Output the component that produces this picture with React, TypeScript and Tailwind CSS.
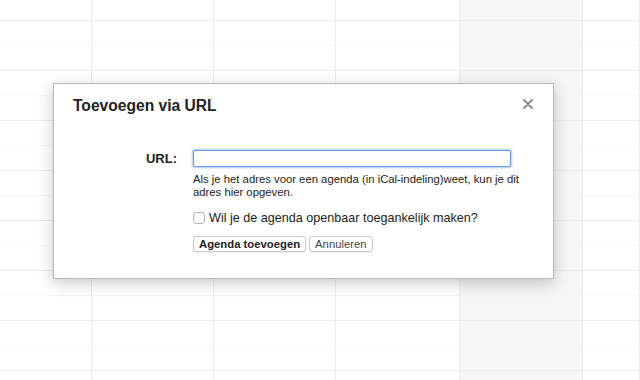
import { useState } from "react";

const columns = [
	{ w: "w-[92px]", today: false },
	{ w: "w-[122px]", today: false },
	{ w: "w-[122px]", today: false },
	{ w: "w-[124px]", today: false },
	{ w: "w-[123px]", today: true },
	{ w: "flex-1", today: false },
];

const rows = Array.from({ length: 16 }, (_, i) => i);

function CalendarGrid() {
	return (
		<div className="flex h-[380px] w-[640px] overflow-hidden bg-white">
			{columns.map((col, ci) => (
				<div
					key={ci}
					className={`${col.w} flex flex-col border-r border-[#ececec] ${col.today ? "bg-[#f6f6f6]" : ""}`}
				>
					{rows.map((r) => (
						<div
							key={r}
							className={`shrink-0 border-b ${r === 0 ? "h-[21px]" : "h-[25px]"} ${r % 2 === 0 ? "border-[#ebebeb]" : "border-[#f6f6f6]"}`}
						/>
					))}
				</div>
			))}
		</div>
	);
}

export default function App() {
	const [url, setUrl] = useState("");
	const [isPublic, setIsPublic] = useState(false);

	return (
		<div
			className="relative h-[380px] w-[640px] overflow-hidden"
			style={{ fontFamily: '"Liberation Sans", Arial, sans-serif' }}
		>
			<CalendarGrid />

			{/* modal dialog */}
			<div className="absolute left-[53px] top-[83px] h-[196px] w-[501px] border border-[#b9b9b9] bg-white shadow-[0_4px_14px_rgba(0,0,0,0.22)]">
				<div className="flex items-start justify-between pl-[19px] pr-[20px] pt-[13px]">
					<h2 className="text-[15.6px] font-bold leading-[18px] text-[#222]">
						Toevoegen via URL
					</h2>
					<button
						type="button"
						className="mt-[2px] text-[#8a8a8a]"
						aria-label="Sluiten"
					>
						<svg width="10" height="10" viewBox="0 0 10 10">
							<path
								d="M1 1L9 9M9 1L1 9"
								stroke="currentColor"
								strokeWidth="1.8"
								strokeLinecap="round"
							/>
						</svg>
					</button>
				</div>

				<div className="mt-[35px] flex items-start gap-4">
					<label
						htmlFor="ical-url"
						className="w-[123px] pt-[1px] text-right text-[13px] font-bold leading-[16px] text-[#222]"
					>
						URL:
					</label>
					<div className="flex flex-col">
						<input
							id="ical-url"
							value={url}
							onChange={(e) => setUrl(e.target.value)}
							className="h-[17px] w-[318px] rounded-[2px] border border-[#6b9de0] bg-white px-1 text-[12px] shadow-[0_0_2px_1px_rgba(110,160,230,0.55)] outline-none"
						/>
						<p className="mt-[6px] w-[345px] text-[11.3px] leading-[13px] text-[#222]">
							Als je het adres voor een agenda (in iCal-indeling)weet, kun je dit
							adres hier opgeven.
						</p>
						<label className="mt-[11px] flex items-center gap-[4px] text-[12.6px] leading-[16px] text-[#222]">
							<input
								type="checkbox"
								checked={isPublic}
								onChange={(e) => setIsPublic(e.target.checked)}
								className="m-0 h-[12px] w-[12px] appearance-none rounded-[3px] border border-[#b5b5b5] bg-white"
							/>
							Wil je de agenda openbaar toegankelijk maken?
						</label>
						<div className="mt-[10px] flex gap-[3px]">
							<button
								type="button"
								className="h-[16px] rounded-[3px] border border-[#c6c6c6] bg-white px-[5px] text-[11.3px] font-bold leading-[14px] text-[#222] shadow-[0_1px_0_rgba(0,0,0,0.05)]"
							>
								Agenda toevoegen
							</button>
							<button
								type="button"
								className="h-[16px] rounded-[3px] border border-[#c6c6c6] bg-white px-[5px] text-[11.3px] leading-[14px] text-[#444] shadow-[0_1px_0_rgba(0,0,0,0.05)]"
							>
								Annuleren
							</button>
						</div>
					</div>
				</div>
			</div>
		</div>
	);
}
